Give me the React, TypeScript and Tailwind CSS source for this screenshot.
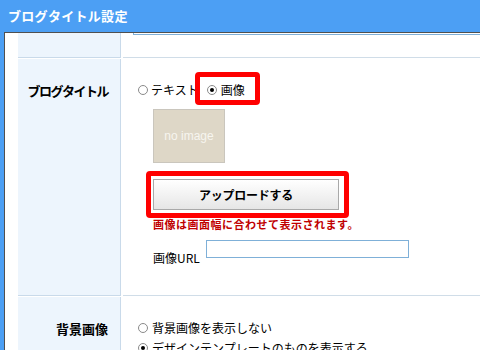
import React from 'react';

const jp = { fontFamily: '"Noto Sans CJK JP", "Noto Sans", sans-serif' };

const Radio: React.FC<{ checked?: boolean; className?: string }> = ({ checked, className }) => (
  <span
    className={
      'shrink-0 w-[10px] h-[10px] rounded-full border border-[#8a8a8a] bg-white flex items-center justify-center ' +
      (className || '')
    }
  >
    {checked && <span className="w-[4px] h-[4px] rounded-full bg-black" />}
  </span>
);

const Label: React.FC<{ children: React.ReactNode; tight?: boolean }> = ({ children, tight }) => (
  <div
    className={
      'w-[103px] shrink-0 bg-[#edf5fd] border-r border-b border-[#c9daea] pt-[24px] pr-[12px] text-right text-[13px] leading-[16px] font-bold text-black ' +
      (tight ? 'tracking-[-1.5px]' : '')
    }
  >
    {children}
  </div>
);

const App: React.FC = () => {
  return (
    <div className="w-[480px] h-[350px] overflow-hidden bg-[#4c9ff4]" style={jp}>
      {/* window title */}
      <div className="h-[32px] pl-[8px] flex items-center text-white text-[13px] font-bold tracking-[0.3px]">
        ブログタイトル設定
      </div>

      <div className="ml-[4px] h-[318px] bg-white border-l border-t border-[#505050] pl-[13px] flex flex-col gap-[1px]">
        {/* previous row, scrolled off */}
        <div className="flex gap-[2px] h-[25px] shrink-0">
          <div className="w-[103px] shrink-0 bg-[#edf5fd] border-r border-b border-[#c9daea]" />
          <div className="flex-1 border-b border-[#d0dde8]">
            <div className="ml-[10px] h-[2px] border-l border-b border-[#7fb0d8]" />
          </div>
        </div>

        {/* blog title */}
        <div className="flex gap-[2px] h-[237px] shrink-0">
          <Label tight>ブログタイトル</Label>
          <div className="flex-1 border-b border-[#d0dde8] relative pt-[23px] pl-[15px] text-[12px] text-black">
            <div className="flex items-center h-[16px] leading-[16px]">
              <Radio />
              <span className="ml-[3px]">テキスト</span>
              <Radio checked className="ml-[8px]" />
              <span className="ml-[4px]">画像</span>
            </div>

            <div className="ml-[15px] mt-[11px] w-[72px] h-[54px] bg-[#ded7c7] border border-[#cac6bd] flex items-center justify-center">
              <span className="text-[12px] text-[#f7f5ef]" style={{ fontFamily: '"Liberation Sans", Arial, sans-serif' }}>
                no image
              </span>
            </div>

            <button className="ml-[15px] mt-[16px] w-[186px] h-[31px] border border-[#a9a9a9] bg-gradient-to-b from-white to-[#e6e6e6] text-[12px] font-bold text-black tracking-[-0.25px] flex items-center justify-center">
              アップロードする
            </button>

            <div className="ml-[15px] mt-[8px] text-[11px] leading-[13px] font-bold text-[#c00000] tracking-[0.5px]">
              画像は画面幅に合わせて表示されます。
            </div>

            <div className="ml-[15px] mt-[9px] flex items-start">
              <span className="mt-[10px] leading-[16px]">画像URL</span>
              <div className="ml-[6px] w-[203px] h-[18px] border border-[#7fb0d8] bg-white" />
            </div>

            {/* annotation boxes */}
            <div className="absolute left-[72px] top-[13px] w-[65px] h-[33px] border-[5px] border-[#ff0000] rounded-[4px]" />
            <div className="absolute left-[23px] top-[112px] w-[203px] h-[47px] border-[5px] border-[#ff0000] rounded-[4px]" />
          </div>
        </div>

        {/* background image */}
        <div className="flex gap-[2px] flex-1">
          <Label>背景画像</Label>
          <div className="flex-1 pt-[23px] pl-[15px] text-[12px] text-black">
            <div className="flex items-center h-[16px] leading-[16px]">
              <Radio />
              <span className="ml-[4px]">背景画像を表示しない</span>
            </div>
            <div className="flex items-center h-[16px] leading-[16px] mt-[4px]">
              <Radio checked />
              <span className="ml-[4px]">デザインテンプレートのものを表示する</span>
            </div>
          </div>
        </div>
      </div>
    </div>
  );
};

export default App;
